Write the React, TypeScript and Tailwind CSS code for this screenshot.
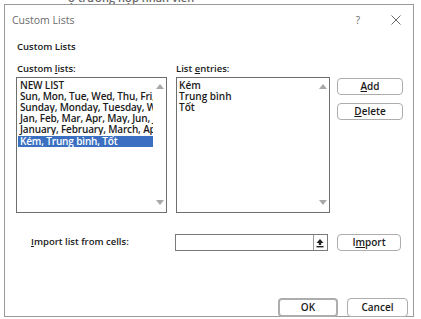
import React from 'react';

const lists = [
  'NEW LIST',
  'Sun, Mon, Tue, Wed, Thu, Fri, Sat',
  'Sunday, Monday, Tuesday, Wednesday',
  'Jan, Feb, Mar, Apr, May, Jun, Jul',
  'January, February, March, April',
  'Kém, Trung bình, Tốt',
];

const entries = ['Kém', 'Trung bình', 'Tốt'];

function ScrollArrows() {
  return (
    <div className="flex flex-col justify-between items-center w-[13px] pt-[5px] pb-[6px] shrink-0">
      <svg width="8" height="6" viewBox="0 0 8 6">
        <path d="M0 6 L4 1 L8 6 Z" fill="#a8a8a8" />
      </svg>
      <svg width="8" height="6" viewBox="0 0 8 6">
        <path d="M0 0 L4 5 L8 0 Z" fill="#a8a8a8" />
      </svg>
    </div>
  );
}

function Button({ children, className = '' }: { children: React.ReactNode; className?: string }) {
  return (
    <div
      className={`flex items-center justify-center border border-[#adadad] rounded-[4px] bg-white text-[10px] font-semibold text-[#1a1a1a] ${className}`}
    >
      {children}
    </div>
  );
}

export default function App() {
  return (
    <div
      className="w-[421px] h-[319px] bg-white overflow-hidden relative"
      style={{ fontFamily: '"Open Sans", "Noto Sans", sans-serif' }}
    >
      {/* cut-off text of the sheet behind the dialog */}
      <div className="h-[4px] overflow-hidden pl-[68px]">
        <div className="text-[11px] leading-[11px] -mt-[8px] text-[#666] font-semibold whitespace-nowrap">
          ợ trường hợp nhân viên
        </div>
      </div>
      <div className="ml-[4px] w-[410px] h-[313px] border border-[#9a9a9a] flex flex-col bg-white">
        {/* title bar */}
        <div className="h-[31px] flex items-center pl-[7px] pr-[12px] shrink-0">
          <span className="text-[10.5px] text-[#6b6b6b]">Custom Lists</span>
          <span className="ml-auto text-[10px] text-[#6b6b6b] mr-[31px]">?</span>
          <svg width="10" height="10" viewBox="0 0 10 10" className="mb-[1px]">
            <path d="M0.5 0.5 L9.5 9.5 M9.5 0.5 L0.5 9.5" stroke="#6b6b6b" strokeWidth="1" />
          </svg>
        </div>

        <div className="flex flex-col pl-[11px] flex-1">
          <div className="text-[9.5px] leading-[12px] font-semibold text-[#1a1a1a] mt-[5px] pl-[1px]">
            Custom Lists
          </div>

          <div className="flex mt-[10px]">
            <div className="flex flex-col w-[151px]">
              <div className="text-[9.5px] leading-[12px] font-semibold text-[#1a1a1a] pl-[1px] h-[14px]">
                Custom <span className="underline">l</span>ists:
              </div>
              <div className="h-[136px] border border-[#6e6e6e] flex">
                <div className="flex-1 overflow-hidden pt-[2px] pl-[1px]">
                  {lists.map((l, i) => (
                    <div
                      key={l}
                      className={`text-[10px] leading-[11px] h-[11px] tracking-[-0.15px] whitespace-nowrap overflow-hidden font-semibold pl-[2px] ${
                        i === lists.length - 1 ? 'bg-[#3a6fc1] text-white mt-[1px]' : 'text-[#1a1a1a]'
                      }`}
                    >
                      {l}
                    </div>
                  ))}
                </div>
                <ScrollArrows />
              </div>
            </div>

            <div className="flex flex-col w-[154px] ml-[9px]">
              <div className="text-[9.5px] leading-[12px] font-semibold text-[#1a1a1a] h-[14px]">
                List <span className="underline">e</span>ntries:
              </div>
              <div className="h-[136px] border border-[#6e6e6e] flex">
                <div className="flex-1 pt-[2px] pl-[2px]">
                  {entries.map((e) => (
                    <div key={e} className="text-[10px] leading-[11px] h-[11px] font-semibold text-[#1a1a1a]">
                      {e}
                    </div>
                  ))}
                </div>
                <ScrollArrows />
              </div>
            </div>

            <div className="flex flex-col ml-[7px] pt-[15px] gap-[8px]">
              <Button className="w-[66px] h-[17px]">
                <span className="underline">A</span>dd
              </Button>
              <Button className="w-[66px] h-[17px]">
                <span className="underline">D</span>elete
              </Button>
            </div>
          </div>

          <div className="flex items-center mt-[21px]">
            <div className="w-[159px] pl-[15px] text-[9.5px] font-semibold text-[#1a1a1a]">
              <span className="underline">I</span>mport list from cells:
            </div>
            <div className="w-[153px] h-[17px] border border-[#7a7a7a] flex justify-end">
              <div className="w-[13px] border-l border-[#9a9a9a] flex items-center justify-center mr-[1px]">
                <svg width="8" height="10" viewBox="0 0 8 10">
                  <path d="M4 1 L7.5 5 L5.2 5 L5.2 7 L2.8 7 L2.8 5 L0.5 5 Z" fill="#222" />
                  <rect x="0.5" y="8" width="7" height="1.4" fill="#222" />
                </svg>
              </div>
            </div>
            <Button className="w-[64px] h-[17px] ml-[9px]">
              I<span className="underline">m</span>port
            </Button>
          </div>

          <div className="flex mt-auto mb-[-1px] pl-[262px]">
            <Button className="w-[60px] h-[19px] border-2 border-[#2b4f7e] rounded-[4px]">OK</Button>
            <Button className="w-[61px] h-[19px] ml-[9px]">Cancel</Button>
          </div>
        </div>
      </div>
    </div>
  );
}
